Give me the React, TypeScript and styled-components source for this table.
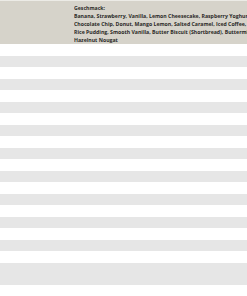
import React from 'react';
import styled, { createGlobalStyle } from 'styled-components';

const GlobalStyle = createGlobalStyle`
  html, body {
    margin: 0;
    padding: 0;
    background: #ffffff;
  }
  body {
    font-family: "Open Sans", "Liberation Sans", sans-serif;
  }
`;

const Table = styled.div`
  width: 247px;
  height: 296px;
  overflow: hidden;
  border-top: 1px solid #ecebe6;
  box-sizing: border-box;
`;

const HeadRow = styled.div`
  display: grid;
  grid-template-columns: 74px 1fr;
  height: 43px;
  background: #d6d3ca;
  overflow: hidden;
`;

const Cell = styled.div`
  padding-top: 3px;
  white-space: nowrap;
  overflow: hidden;
`;

const Label = styled.div`
  font-size: 5.2px;
  line-height: 8px;
  font-weight: 700;
  color: #2b2a27;
`;

const Row = styled.div<{ $shade: boolean; $tall?: boolean }>`
  height: ${({ $tall }) => ($tall ? '22px' : '11.5px')};
  background: ${({ $shade }) => ($shade ? '#e6e6e6' : '#ffffff')};
`;

const flavours = [
  'Geschmack:',
  'Banana, Strawberry, Vanilla, Lemon Cheesecake, Raspberry Yoghurt,',
  'Chocolate Chip, Donut, Mango Lemon, Salted Caramel, Iced Coffee,',
  'Rice Pudding, Smooth Vanilla, Butter Biscuit (Shortbread), Buttermilk,',
  'Hazelnut Nougat',
];

const App: React.FC = () => {
  const rows = Array.from({ length: 19 }, (_, i) => i);
  return (
    <>
      <GlobalStyle />
      <Table>
        <HeadRow>
          <div />
          <Cell>
            {flavours.map((line) => (
              <Label key={line}>{line}</Label>
            ))}
          </Cell>
        </HeadRow>
        {rows.map((i) => (
          <Row key={i} $shade={i % 2 === 1} />
        ))}
        <Row $shade $tall />
        <Row $shade={false} />
      </Table>
    </>
  );
};

export default App;
